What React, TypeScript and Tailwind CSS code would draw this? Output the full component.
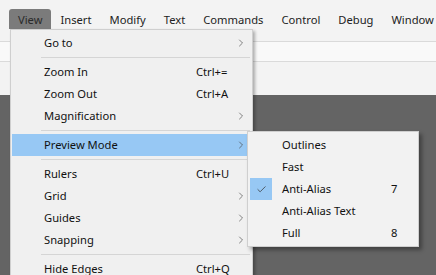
import { ChevronRight, Check } from 'lucide-react';

type Entry =
  | { kind: 'sep' }
  | { kind: 'item'; label: string; shortcut?: string; sub?: boolean; active?: boolean };

const viewMenu: Entry[] = [
  { kind: 'item', label: 'Go to', sub: true },
  { kind: 'sep' },
  { kind: 'item', label: 'Zoom In', shortcut: 'Ctrl+=' },
  { kind: 'item', label: 'Zoom Out', shortcut: 'Ctrl+A' },
  { kind: 'item', label: 'Magnification', sub: true },
  { kind: 'sep' },
  { kind: 'item', label: 'Preview Mode', sub: true, active: true },
  { kind: 'sep' },
  { kind: 'item', label: 'Rulers', shortcut: 'Ctrl+U' },
  { kind: 'item', label: 'Grid', sub: true },
  { kind: 'item', label: 'Guides', sub: true },
  { kind: 'item', label: 'Snapping', sub: true },
  { kind: 'sep' },
  { kind: 'item', label: 'Hide Edges', shortcut: 'Ctrl+Q' }
];

const previewModes = [
  { label: 'Outlines' },
  { label: 'Fast' },
  { label: 'Anti-Alias', shortcut: '7', checked: true },
  { label: 'Anti-Alias Text' },
  { label: 'Full', shortcut: '8' }
];

const menuBar = ['View', 'Insert', 'Modify', 'Text', 'Commands', 'Control', 'Debug', 'Window'];

export default function App() {
  return (
    <div
      className="relative h-[275px] w-[436px] overflow-hidden bg-[#646464] text-[11.2px] text-[#111]"
      style={{ fontFamily: '"Noto Sans", "Open Sans", sans-serif' }}
    >
      <div className="flex h-[29px] items-end bg-[#f3f3f3] pl-[9px]">
        {menuBar.map((name, i) => (
          <div
            key={name}
            className={
              i === 0
                ? 'flex h-[20px] items-center rounded-t-[3px] bg-[#7b7b7b] px-[9px] pt-[2px] text-[#2a2a2a]'
                : 'flex h-[20px] items-center px-[9px] pt-[2px] text-[#222]'
            }
          >
            {name}
          </div>
        ))}
      </div>
      <div className="h-[12px] bg-[#f3f3f3]" />
      <div className="h-[21px] border-y border-[#dadada] bg-[#f9f9f9]" />
      <div className="h-[33px] bg-[#f3f3f3]" />

      <div className="absolute left-[10px] top-[29px] w-[243px] border border-[#cfcfcf] bg-[#f0f0f0] py-[2px] pl-px pr-[2px] shadow-[2px_2px_3px_rgba(0,0,0,0.3)]">
        {viewMenu.map((e, i) =>
          e.kind === 'sep' ? (
            <div key={i} className="flex h-[7px] items-center pl-[29px]">
              <div className="h-px w-full bg-[#d5d5d5]" />
            </div>
          ) : (
            <div
              key={i}
              className={`flex h-[22px] items-center pl-[32px] ${e.active ? 'bg-[#97c8f4]' : ''}`}
            >
              <span className="flex-1">{e.label}</span>
              <span className="w-[39px]">{e.shortcut}</span>
              <span className="flex w-[15px] justify-start">
                {e.sub && <ChevronRight size={12} strokeWidth={1.3} className="text-[#444]" />}
              </span>
            </div>
          )
        )}
      </div>

      <div className="absolute left-[247px] top-[131px] w-[172px] border border-[#cfcfcf] bg-[#f2f2f2] py-[2px] pl-[2px] shadow-[3px_3px_4px_rgba(0,0,0,0.35)]">
        {previewModes.map((m) => (
          <div key={m.label} className="flex h-[22px] items-center">
            <span
              className={`flex h-[22px] w-[22px] items-center justify-center ${m.checked ? 'bg-[#97c8f4]' : ''}`}
            >
              {m.checked && <Check size={11} strokeWidth={1.6} className="text-[#333]" />}
            </span>
            <span className="ml-[10px] flex-1">{m.label}</span>
            <span className="w-[27px]">{m.shortcut}</span>
          </div>
        ))}
      </div>
    </div>
  );
}
